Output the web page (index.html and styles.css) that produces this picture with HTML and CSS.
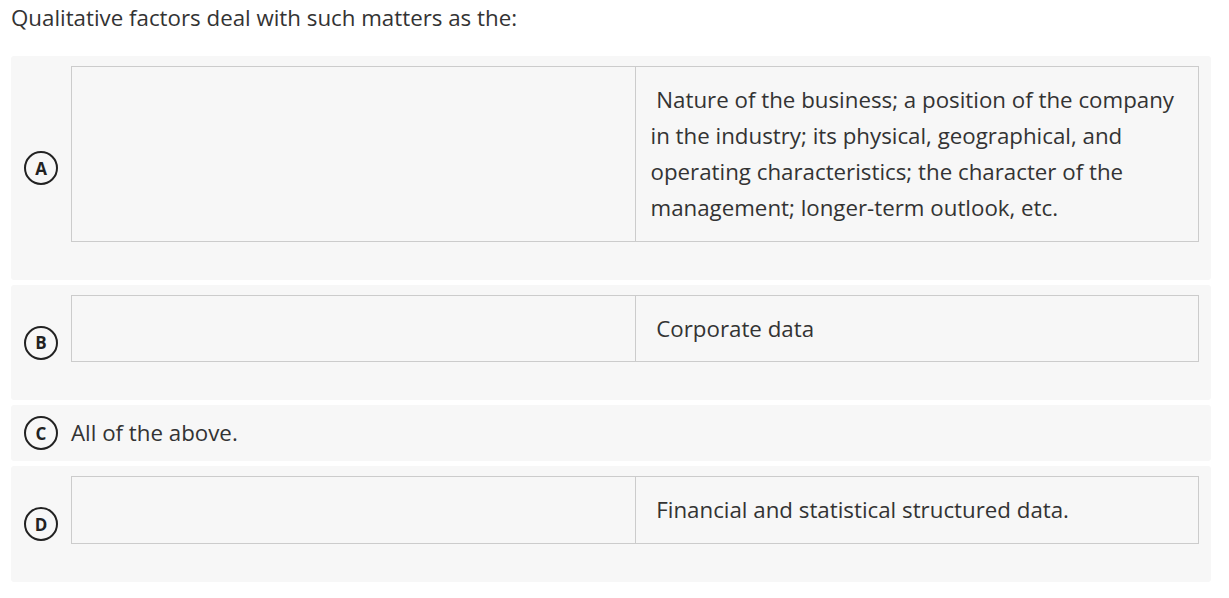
FILE: index.html
```html
<!DOCTYPE html>
<html lang="en">
<head>
<meta charset="utf-8">
<title>Question</title>
<link rel="stylesheet" href="styles.css">
</head>
<body>
<div class="page">
  <div class="question">Qualitative factors deal with such matters as the:</div>
  <div class="options">
    <div class="option">
      <span class="letter">A</span>
      <div class="content">
        <table class="pair">
          <tr>
            <td class="cell"></td>
            <td class="cell">&nbsp;Nature of the business; a position of the company in the industry; its physical, geographical, and operating characteristics; the character of the management; longer-term outlook, etc.</td>
          </tr>
        </table>
      </div>
    </div>
    <div class="option">
      <span class="letter">B</span>
      <div class="content">
        <table class="pair">
          <tr>
            <td class="cell"></td>
            <td class="cell">&nbsp;Corporate data</td>
          </tr>
        </table>
      </div>
    </div>
    <div class="option option-text">
      <span class="letter">C</span>
      <div class="text">All of the above.</div>
    </div>
    <div class="option">
      <span class="letter">D</span>
      <div class="content">
        <table class="pair">
          <tr>
            <td class="cell"></td>
            <td class="cell">&nbsp;Financial and statistical structured data.</td>
          </tr>
        </table>
      </div>
    </div>
  </div>
</div>
</body>
</html>
```
FILE: styles.css
```css
html, body {
  margin: 0;
  padding: 0;
  background: #ffffff;
}
body {
  font-family: "Open Sans", "Liberation Sans", sans-serif;
  color: #333333;
}
.page {
  width: 1200px;
  padding-left: 11px;
}
.question {
  font-size: 22.3px;
  line-height: 36px;
  margin-bottom: 20px;
}
.options {
  display: flex;
  flex-direction: column;
  gap: 5px;
}
.option {
  display: flex;
  align-items: center;
  background: #f7f7f7;
  border-radius: 3px;
  padding: 10px 12px 38px 13px;
}
.option-text {
  padding: 0 12px 0 13px;
  height: 56px;
}
.letter {
  flex: none;
  box-sizing: border-box;
  width: 34px;
  height: 34px;
  border: 2px solid #222222;
  border-radius: 50%;
  display: flex;
  align-items: center;
  justify-content: center;
  font-size: 17px;
  font-weight: 700;
  color: #222222;
  margin-right: 13px;
}
.content {
  flex: 1;
  align-self: flex-start;
}
.option:not(.option-text) .letter {
  margin-top: 28px;
}
.text {
  font-size: 22.3px;
  line-height: 36px;
}
.pair {
  width: 100%;
  border-collapse: collapse;
  table-layout: fixed;
}
.cell {
  width: 50%;
  border: 1px solid #cccccc;
  padding: 14.5px 15px;
  font-size: 22.3px;
  line-height: 36.3px;
  vertical-align: middle;
}
```
